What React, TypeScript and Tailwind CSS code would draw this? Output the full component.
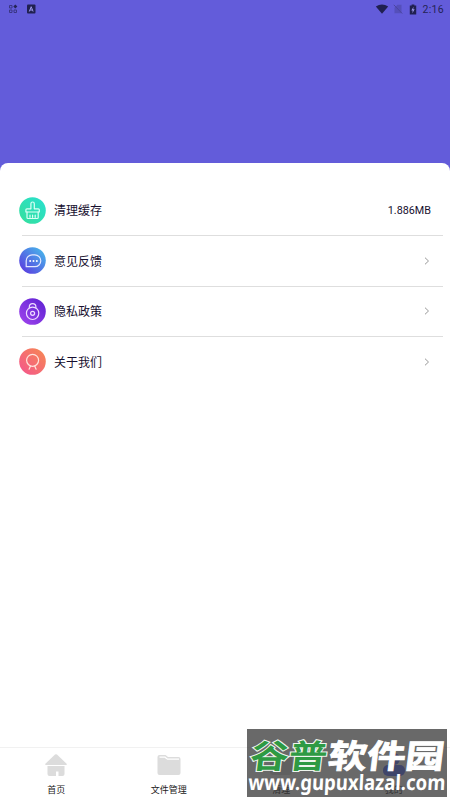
import React from 'react';

const CleanIcon = () => (
  <svg viewBox="0 0 27 27" className="h-[27px] w-[27px]">
    <defs>
      <linearGradient id="clean" x1="0" y1="1" x2="1" y2="0">
        <stop offset="0" stopColor="#35df9b" />
        <stop offset="1" stopColor="#29e0d0" />
      </linearGradient>
    </defs>
    <circle cx="13.5" cy="13.5" r="13.3" fill="url(#clean)" />
    <g fill="none" stroke="#dcfff6" strokeWidth="1.2" strokeLinejoin="round" strokeLinecap="round">
      <path d="M11.9 11.8V6.7a1.7 1.7 0 0 1 3.4 0v5.1h4a1 1 0 0 1 1 1V15H6.9v-2.2a1 1 0 0 1 1-1z" />
      <path d="M8 15v5.5a1 1 0 0 0 1 1h9.2a1 1 0 0 0 1-1V15M11 18v2.3M13.6 18v2.3M16.2 18v2.3" />
    </g>
  </svg>
);

const FeedbackIcon = () => (
  <svg viewBox="0 0 27 27" className="h-[27px] w-[27px]">
    <defs>
      <linearGradient id="feedback" x1="0.1" y1="0.9" x2="0.9" y2="0.1">
        <stop offset="0" stopColor="#5a3ee0" />
        <stop offset="1" stopColor="#48b4ea" />
      </linearGradient>
    </defs>
    <circle cx="13.5" cy="13.5" r="13.3" fill="url(#feedback)" />
    <path d="M7.2 19.7v-5.9a5.9 5.9 0 0 1 5.9-5.9h2.8a5.9 5.9 0 0 1 0 11.8z" fill="none" stroke="#e4e8ff" strokeWidth="1.2" strokeLinejoin="round" />
    <g fill="#fff">
      <circle cx="11.2" cy="13.9" r="1" />
      <circle cx="14.5" cy="13.9" r="1" />
      <circle cx="17.8" cy="13.9" r="1" />
    </g>
  </svg>
);

const PrivacyIcon = () => (
  <svg viewBox="0 0 27 27" className="h-[27px] w-[27px]">
    <defs>
      <linearGradient id="privacy" x1="0" y1="1" x2="1" y2="0">
        <stop offset="0" stopColor="#a146ed" />
        <stop offset="1" stopColor="#5c20d2" />
      </linearGradient>
    </defs>
    <circle cx="13.5" cy="13.5" r="13.3" fill="url(#privacy)" />
    <g fill="none" stroke="#eedcff" strokeWidth="1.2">
      <circle cx="13.6" cy="15.3" r="6.2" />
      <circle cx="13.6" cy="15.3" r="2" />
      <path d="M10.3 10V8.9a3.3 3.3 0 0 1 6.6 0V10" />
    </g>
  </svg>
);

const AboutIcon = () => (
  <svg viewBox="0 0 27 27" className="h-[27px] w-[27px]">
    <defs>
      <linearGradient id="about" x1="0" y1="1" x2="1" y2="0">
        <stop offset="0" stopColor="#f4548f" />
        <stop offset="1" stopColor="#f68a50" />
      </linearGradient>
    </defs>
    <circle cx="13.5" cy="13.5" r="13.3" fill="url(#about)" />
    <g fill="none" stroke="#ffe3dc" strokeWidth="1.2" strokeLinecap="round">
      <circle cx="13.6" cy="12.3" r="6" />
      <path d="M11.5 18l-1.4 3.2M15.7 18l1.4 3.2" />
    </g>
  </svg>
);

const rows = [
  { label: '清理缓存', icon: <CleanIcon />, value: '1.886MB' },
  { label: '意见反馈', icon: <FeedbackIcon /> },
  { label: '隐私政策', icon: <PrivacyIcon /> },
  { label: '关于我们', icon: <AboutIcon /> },
];

const tabs = [
  {
    label: '首页',
    icon: (
      <svg viewBox="0 0 24 24" className="h-6 w-6" fill="#dcdcdc">
        <path d="M11 1.6q1-.9 2 0l9.6 9.1q.8 1-.4 1.2H1.8Q.6 11.7 1.4 10.7z" />
        <path d="M3.5 13H20.5V21a2 2 0 0 1-2 2H14.5V18.5H12V23H5.5a2 2 0 0 1-2-2z" />
      </svg>
    ),
  },
  {
    label: '文件管理',
    icon: (
      <svg viewBox="0 0 24 24" className="h-6 w-6">
        <path d="M2.5 2H8.5l2.5 2H21.5a2 2 0 0 1 2 2V20a2 2 0 0 1-2 2H2.500a2 2 0 0 1-2-2V4a2 2 0 0 1 2-2z" fill="#dcdcdc" />
        <path d="M2.5 4.2H8l2.5 2H22" fill="none" stroke="#fff" strokeWidth="1.2" />
      </svg>
    ),
  },
  {
    label: '清理',
    icon: (
      <svg viewBox="0 0 24 24" className="h-6 w-6" fill="#dcdcdc">
        <rect x="1" y="2" width="22" height="20" rx="3" />
      </svg>
    ),
  },
  {
    label: '我的',
    icon: (
      <svg viewBox="0 0 24 24" className="h-6 w-6" fill="#5a70ff">
        <circle cx="12" cy="6" r="6" />
        <rect x="1" y="12" width="22" height="11" rx="5" />
      </svg>
    ),
  },
];

export default function App() {
  return (
    <div className="relative flex h-[800px] w-[450px] flex-col overflow-hidden bg-[#635cda] font-['Roboto','Noto_Sans_CJK_SC',sans-serif] text-[#17102f]">
      {/* Status bar */}
      <header className="flex h-[163px] shrink-0 items-start justify-between pt-[2px] pr-[6px] pl-2 text-[#242355]">
        <div className="flex h-[14px] items-center gap-[8px]">
          <svg viewBox="0 0 10 10" className="h-[10px] w-[10px]" fill="none" stroke="#3b3784">
            <path d="M1.5 1.5H4V4H1.5zM1.5 6H4v2.5H1.5zM6 6h2.5v2.5H6z" />
            <path d="M7.3.5l2 2-2 2-2-2z" fill="#242355" stroke="none" />
          </svg>
          <svg viewBox="0 0 10 10" className="h-[10px] w-[10px]">
            <rect x="1" y=".5" width="8.5" height="9" rx="1" fill="#202050" />
            <path d="M3.3 7.5L5.2 2.7 7.1 7.5M4 6h2.5" fill="none" stroke="#9c98ec" />
          </svg>
        </div>
        <div className="flex h-[14px] items-center">
          <svg viewBox="0 0 14 10" className="h-[10px] w-[14px]" fill="#202050">
            <path d="M.8 2.5Q7-1.5 13.2 2.5L7 9.7z" />
          </svg>
          <svg viewBox="0 0 10 10" className="ml-[4px] h-[10px] w-[10px]" fill="none" stroke="#4b469f">
            <path d="M1.5 3.8v5.4h7V.8h-4z" fill="#554fba" stroke="none" />
            <path d="M.8.8l8.4 8.7" />
          </svg>
          <svg viewBox="0 0 8 12" className="ml-[6px] h-[11px] w-[8px]">
            <path d="M2.5.5h3v1H7.5V11.5H.5V1.5h2z" fill="#202050" />
            <path d="M4.6 3L2.2 7h1.5L3.3 10l2.5-4.2H4.2z" fill="#9c98ec" />
          </svg>
          <span className="mt-[2px] ml-[6px] text-[10.5px] leading-[14px] tracking-[0.3px]">2:16</span>
        </div>
      </header>

      <main className="flex-1 rounded-t-[8px] bg-white pt-[22.5px]">
        {rows.map((row) => (
          <div key={row.label} className="group flex h-[50.5px] flex-col pr-[7px] pl-[22px]">
            <div className="-ml-[3px] flex flex-1 items-center pr-[12px]">
              {row.icon}
              <span className="mt-[2px] ml-[8px] flex-1 text-[12px] leading-[18px]">{row.label}</span>
              {row.value ? (
                <span className="mt-[2px] text-[10.8px] leading-[16px]">{row.value}</span>
              ) : (
                <svg viewBox="0 0 6 8" className="mr-px h-[8px] w-[6px]" fill="none" stroke="#999">
                  <path d="M1 .7L4.5 4 1 7.3" />
                </svg>
              )}
            </div>
            <div className="h-px bg-[#dedede] group-last:bg-transparent" />
          </div>
        ))}
      </main>

      <nav className="flex h-[53px] shrink-0 border-t border-[#f1f1f1] bg-white pt-[5px]">
        {tabs.map((tab) => (
          <div key={tab.label} className="flex flex-1 flex-col items-center">
            {tab.icon}
            <span className="mt-[7px] text-[9px] leading-[12px] text-[#222]">{tab.label}</span>
          </div>
        ))}
      </nav>

      {/* Site watermark, floats over the tab bar */}
      <div className="absolute top-[729px] left-[247px] h-[68px] w-[200px] bg-[#373737]/75">
        <svg viewBox="0 0 200 68" className="h-[68px] w-[200px] overflow-visible">
          <g fontFamily="Noto Sans CJK SC, sans-serif" fontWeight="700" fontSize="38" paintOrder="stroke" transform="translate(5 38.5) skewX(-7) scale(1 .86)">
            <text x="-3" y="0" textLength="77" lengthAdjust="spacingAndGlyphs" fill="#2e9a43" stroke="#eef5ee" strokeWidth="2.4">谷普</text>
            <text x="75" y="0" textLength="116" lengthAdjust="spacingAndGlyphs" fill="#fff" stroke="#fff" strokeWidth="1">软件园</text>
          </g>
          <text x="0" y="0" transform="translate(1 61) skewX(-3)" textLength="197" lengthAdjust="spacingAndGlyphs" fontFamily="Noto Sans, sans-serif" fontWeight="700" fontSize="21" fill="#fff">www.gupuxlazal.com</text>
        </svg>
      </div>
    </div>
  );
}
